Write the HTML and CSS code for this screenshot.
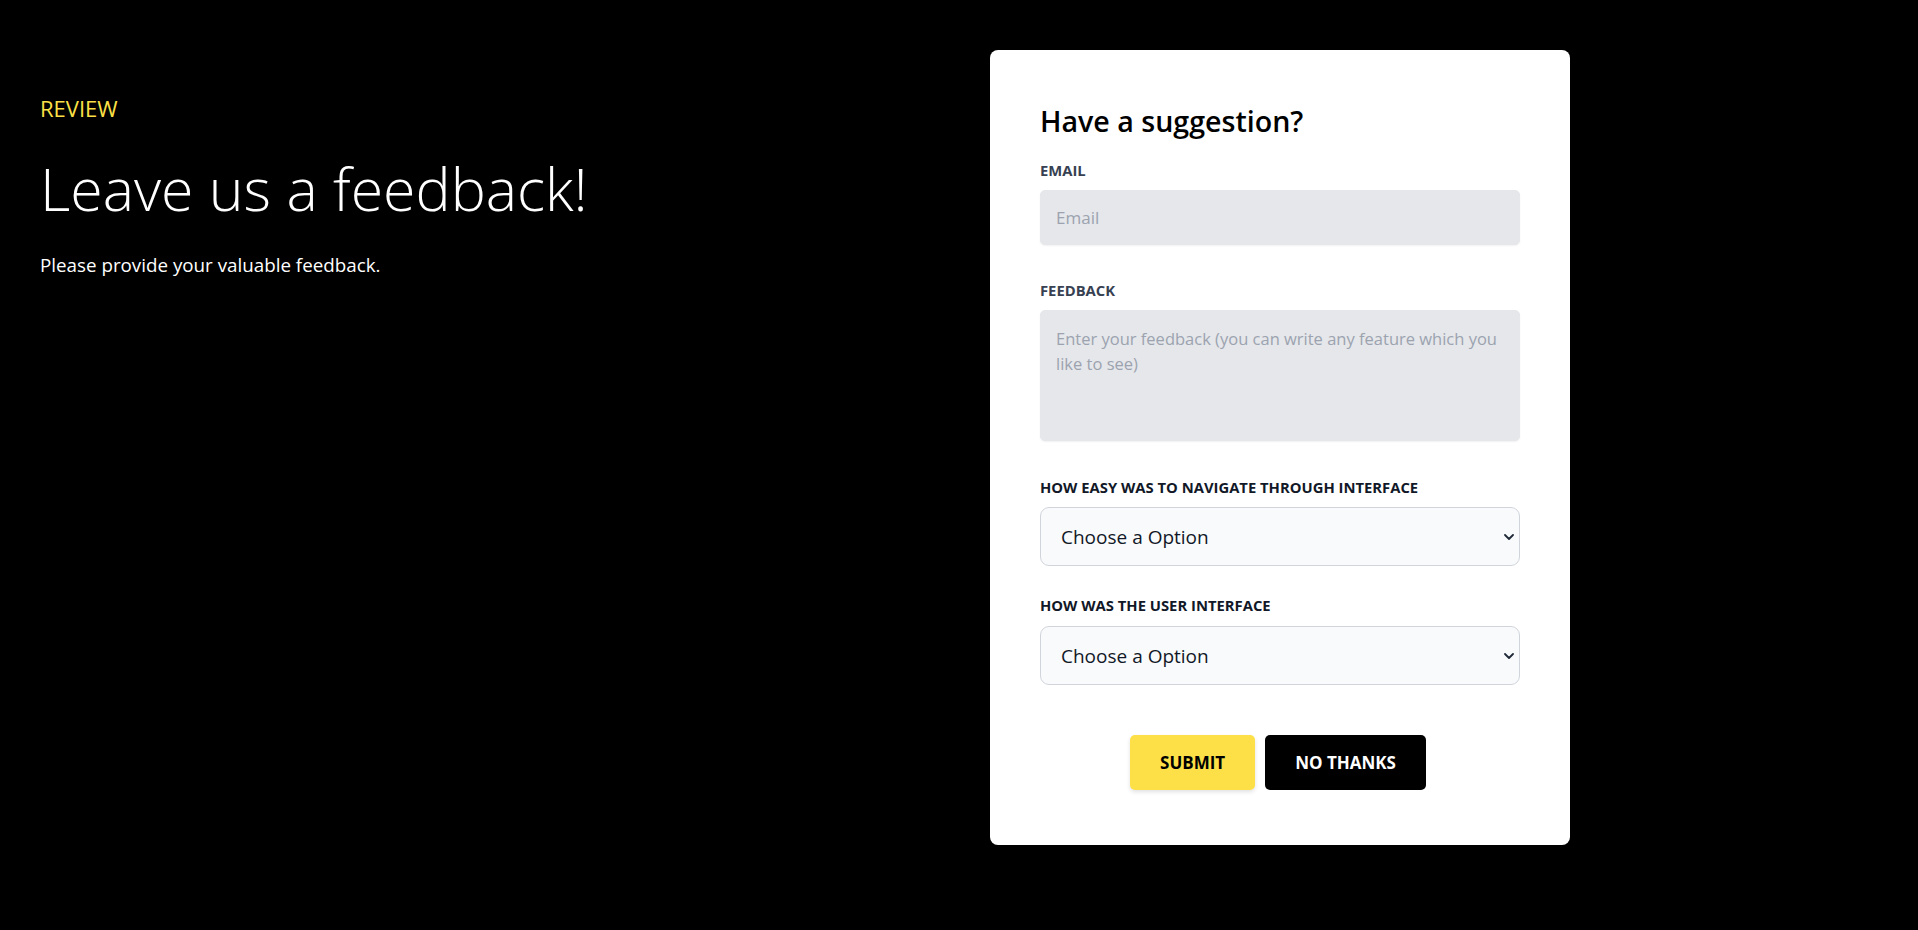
FILE: index.html
```html
<!DOCTYPE html>
<html lang="en">
<head>
<meta charset="utf-8">
<title>Feedback</title>
<link rel="stylesheet" href="styles.css">
</head>
<body>
<main class="page">
  <section class="intro">
    <p class="eyebrow">REVIEW</p>
    <h1 class="headline">Leave us a feedback!</h1>
    <p class="lead">Please provide your valuable feedback.</p>
  </section>
  <form class="card">
    <h2 class="card-title">Have a suggestion?</h2>
    <label class="label label-muted" for="email">EMAIL</label>
    <input class="field field-input" id="email" type="email" placeholder="Email">
    <label class="label label-muted label-gap" for="fb">FEEDBACK</label>
    <textarea class="field field-area" id="fb" placeholder="Enter your feedback (you can write any feature which you like to see)"></textarea>
    <label class="label label-dark label-gap3" for="nav">HOW EASY WAS TO NAVIGATE THROUGH INTERFACE</label>
    <div class="select-wrap">
      <select class="select" id="nav"><option>Choose a Option</option></select>
      <svg class="chevron" viewBox="0 0 10 6" width="10" height="6"><path d="M1 1l4 4 4-4" fill="none" stroke="#1f2937" stroke-width="1.8" stroke-linecap="round" stroke-linejoin="round"/></svg>
    </div>
    <label class="label label-dark label-gap2" for="ui">HOW WAS THE USER INTERFACE</label>
    <div class="select-wrap">
      <select class="select" id="ui"><option>Choose a Option</option></select>
      <svg class="chevron" viewBox="0 0 10 6" width="10" height="6"><path d="M1 1l4 4 4-4" fill="none" stroke="#1f2937" stroke-width="1.8" stroke-linecap="round" stroke-linejoin="round"/></svg>
    </div>
    <div class="actions">
      <button type="button" class="btn btn-yellow">SUBMIT</button>
      <button type="button" class="btn btn-black">NO THANKS</button>
    </div>
  </form>
</main>
</body>
</html>
```

FILE: styles.css
```css
* { box-sizing: border-box; }
html, body {
  margin: 0;
  background: #000;
  font-family: "Open Sans", "Noto Sans", sans-serif;
}
.page {
  display: flex;
  align-items: flex-start;
  min-height: 930px;
}
.intro {
  width: 990px;
  padding: 94px 40px 0;
}
.eyebrow {
  margin: 0;
  color: #fde047;
  font-size: 22px;
  line-height: 28px;
}
.headline {
  margin: 37px 0 0;
  color: #fff;
  font-weight: 300;
  font-size: 59px;
  line-height: 59px;
}
.lead {
  margin: 35px 0 0;
  color: #fff;
  font-size: 18.8px;
  line-height: 24px;
}
.card {
  width: 580px;
  margin-top: 50px;
  background: #fff;
  border-radius: 8px;
  padding: 53px 50px 55px;
  display: flex;
  flex-direction: column;
}
.card-title {
  margin: 0;
  color: #000;
  font-weight: 600;
  font-size: 28.6px;
  line-height: 36px;
}
.label {
  display: block;
  font-weight: 700;
  font-size: 14.8px;
  line-height: 20px;
  margin-top: 21px;
  margin-bottom: 10px;
}
.label-gap { margin-top: 35px; }
.label-gap3 { margin-top: 36px; }
.label-gap2 { margin-top: 29px; margin-bottom: 11px; }
.label-muted { color: #374151; }
.label-dark { color: #111827; }
.field {
  display: block;
  width: 100%;
  background: #e5e7eb;
  border: 1px solid #e5e7eb;
  border-radius: 5px;
  font-family: inherit;
  font-size: 17px;
  color: #374151;
  box-shadow: 0 1px 2px rgba(0,0,0,0.06);
  outline: none;
}
.field::placeholder { color: #9ca3af; }
.field-input {
  height: 55px;
  padding: 0 15px;
}
.field-area {
  height: 131px;
  padding: 15px 12px 15px 15px;
  font-size: 16.5px;
  line-height: 25px;
  resize: none;
}
.select-wrap {
  position: relative;
}
.select {
  display: block;
  width: 100%;
  height: 59px;
  appearance: none;
  -webkit-appearance: none;
  background: #f9fafb;
  border: 1px solid #d1d5db;
  border-radius: 9px;
  padding: 0 20px;
  font-family: inherit;
  font-size: 19px;
  color: #111827;
  outline: none;
}
.chevron {
  position: absolute;
  right: 6px;
  top: 27px;
}
.actions {
  display: flex;
  justify-content: center;
  gap: 10px;
  margin-top: 50px;
  padding-right: 4px;
}
.btn {
  height: 55px;
  padding: 0 30px;
  border: none;
  border-radius: 5px;
  font-family: inherit;
  font-weight: 700;
  font-size: 17px;
  cursor: pointer;
}
.btn-yellow {
  background: #fde047;
  color: #000;
  box-shadow: 0 2px 4px rgba(0,0,0,0.12);
}
.btn-black {
  background: #000;
  color: #fff;
}
```
